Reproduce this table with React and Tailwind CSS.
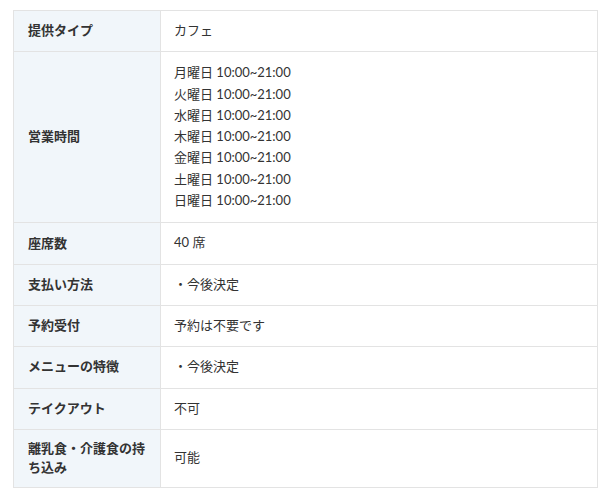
import React from 'react';

const hours = ['月', '火', '水', '木', '金', '土', '日'];

const rows = [
  { label: '提供タイプ', value: 'カフェ' },
  {
    label: '営業時間',
    value: (
      <div className="py-[1px]">
        {hours.map((d) => (
          <div key={d}>{d}曜日 10:00~21:00</div>
        ))}
      </div>
    ),
  },
  { label: '座席数', value: '40 席' },
  { label: '支払い方法', value: '・今後決定' },
  { label: '予約受付', value: '予約は不要です' },
  { label: 'メニューの特徴', value: '・今後決定' },
  { label: 'テイクアウト', value: '不可' },
  { label: '離乳食・介護食の持ち込み', value: '可能' },
];

const App = () => {
  return (
    <div
      className="w-[610px] h-[500px] bg-white pt-[10px] pl-[13px]"
      style={{ fontFamily: 'Lato, "Noto Sans CJK JP", sans-serif' }}
    >
      <table className="w-[585px] border-collapse text-[13px] text-[#333]">
        <tbody>
          {rows.map((r) => (
            <tr key={r.label}>
              <th className="w-[147px] border border-[#e3e3e3] bg-[#f1f6fa] pt-[9px] pb-[10px] pl-[14px] pr-[12px] text-left align-middle font-bold leading-[19px]">
                {r.label}
              </th>
              <td className="border border-[#e3e3e3] pt-[9px] pb-[10px] pl-[13px] align-middle leading-[21.3px]">
                {r.value}
              </td>
            </tr>
          ))}
        </tbody>
      </table>
    </div>
  );
};

export default App;
